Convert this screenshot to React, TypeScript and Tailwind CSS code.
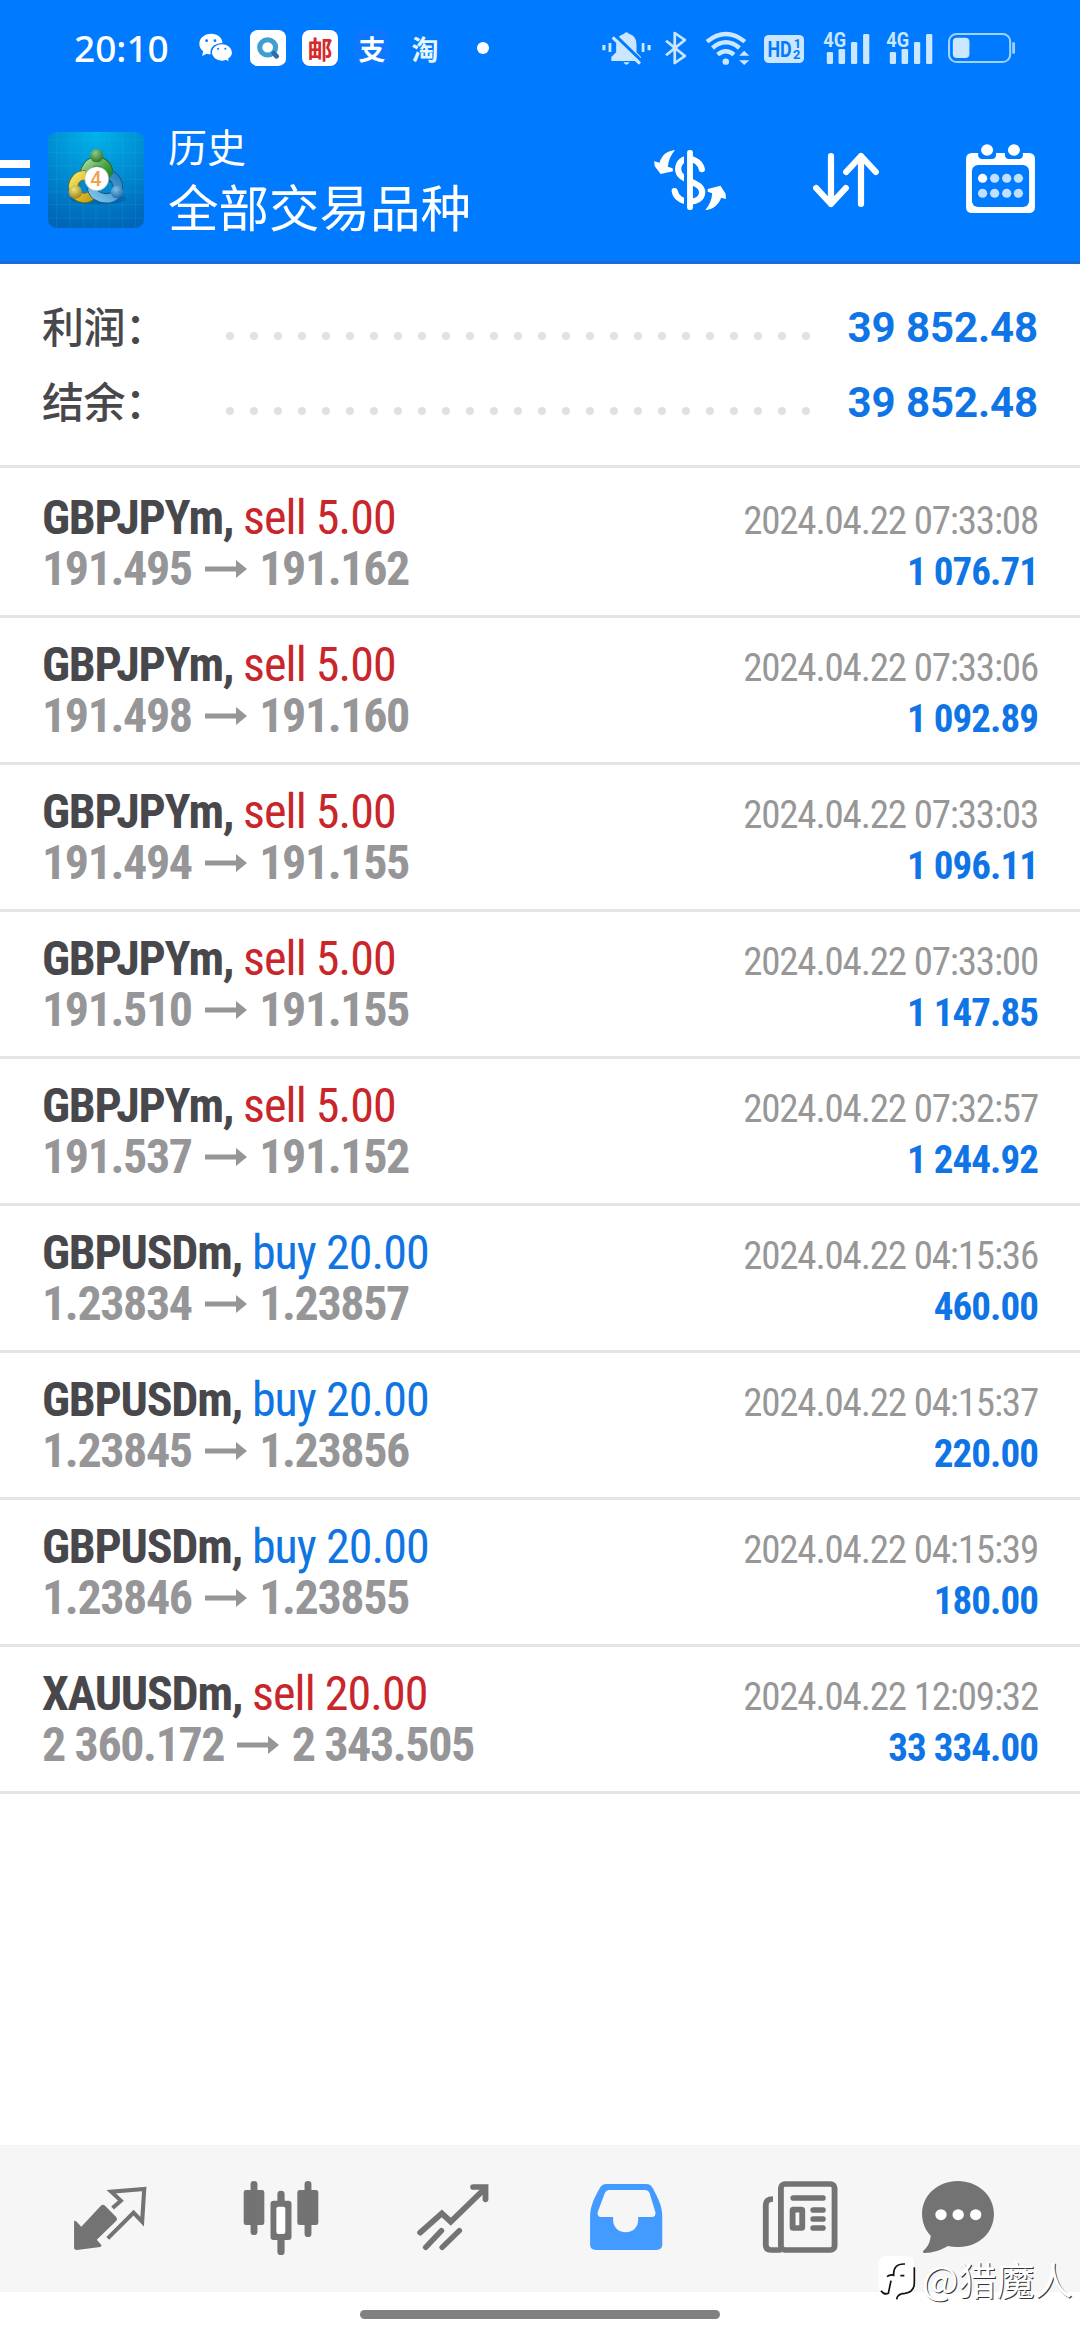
import clsx from "clsx";

interface Deal {
  symbol: string;
  side: "buy" | "sell";
  volume: string;
  open: string;
  close: string;
  time: string;
  profit: string;
}

const deals: Deal[] = [
  { symbol: "GBPJPYm", side: "sell", volume: "5.00", open: "191.495", close: "191.162", time: "2024.04.22 07:33:08", profit: "1 076.71" },
  { symbol: "GBPJPYm", side: "sell", volume: "5.00", open: "191.498", close: "191.160", time: "2024.04.22 07:33:06", profit: "1 092.89" },
  { symbol: "GBPJPYm", side: "sell", volume: "5.00", open: "191.494", close: "191.155", time: "2024.04.22 07:33:03", profit: "1 096.11" },
  { symbol: "GBPJPYm", side: "sell", volume: "5.00", open: "191.510", close: "191.155", time: "2024.04.22 07:33:00", profit: "1 147.85" },
  { symbol: "GBPJPYm", side: "sell", volume: "5.00", open: "191.537", close: "191.152", time: "2024.04.22 07:32:57", profit: "1 244.92" },
  { symbol: "GBPUSDm", side: "buy", volume: "20.00", open: "1.23834", close: "1.23857", time: "2024.04.22 04:15:36", profit: "460.00" },
  { symbol: "GBPUSDm", side: "buy", volume: "20.00", open: "1.23845", close: "1.23856", time: "2024.04.22 04:15:37", profit: "220.00" },
  { symbol: "GBPUSDm", side: "buy", volume: "20.00", open: "1.23846", close: "1.23855", time: "2024.04.22 04:15:39", profit: "180.00" },
  { symbol: "XAUUSDm", side: "sell", volume: "20.00", open: "2 360.172", close: "2 343.505", time: "2024.04.22 12:09:32", profit: "33 334.00" },
];

function Signal() {
  return (
    <svg className="h-[35px] w-[47px] overflow-visible" viewBox="818 90 136 105" preserveAspectRatio="none" fill="#cbe6ff">
      <text x="819" y="138" fontSize="60" fontWeight="700" fontFamily="Roboto, sans-serif" textLength="66" lengthAdjust="spacingAndGlyphs">4G</text>
      <rect x="829" y="153" width="18" height="36" rx="4" />
      <rect x="863" y="144" width="19" height="45" rx="4" />
      <rect x="899" y="123" width="18" height="66" rx="4" />
      <rect x="934" y="99" width="18" height="90" rx="4" />
    </svg>
  );
}

function StatusBar() {
  return (
    <div className="flex h-24 items-center pl-[74px] pr-[65px] text-white">
      <span className="mb-0.5 w-[125px] font-['Noto_Sans',sans-serif] text-[37px] font-medium leading-none">20:10</span>
      <svg className="h-[30px] w-[34px]" viewBox="579 100 98 90" preserveAspectRatio="none">
        <path d="M614 102c-19 0-34 13-34 30 0 9 4 17 11 23l-3 14 13-7c4 1 9 2 13 2 19 0 33-14 33-32s-14-30-33-30Z" fill="#fff" />
        <path d="M645 132c-17 0-31 11-31 26s14 27 31 27c4 0 8-1 11-2l12 4-3-9c7-5 11-12 11-20 0-15-14-26-31-26Z" fill="#fff" stroke="#007bff" strokeWidth="4" />
        <g fill="#007bff">
          <circle cx="601" cy="123" r="4" />
          <circle cx="625" cy="123" r="4" />
          <circle cx="634" cy="147" r="3" />
          <circle cx="655" cy="147" r="3" />
        </g>
      </svg>
      <svg className="ml-[17px] size-9" viewBox="726 90 104 108" preserveAspectRatio="none">
        <rect x="726" y="90" width="104" height="108" rx="22" fill="#fff" />
        <circle cx="777" cy="142" r="23" fill="none" stroke="#3f9fd0" strokeWidth="15" />
        <path d="M795 160l8 9" stroke="#2a6fae" strokeWidth="14" strokeLinecap="round" />
      </svg>
      <div className="ml-4 flex size-9 items-center justify-center rounded-lg bg-white font-['Noto_Sans_CJK_SC',sans-serif] text-[25px] font-bold leading-none text-[#d62a2f]">
        邮
      </div>
      <div className="ml-4 flex size-9 items-center justify-center rounded-lg bg-[#0c77ff] font-['Noto_Sans_CJK_SC',sans-serif] text-[27px] font-bold leading-none">
        支
      </div>
      <div className="ml-[17px] flex size-9 items-center justify-center font-['Noto_Sans_CJK_SC',sans-serif] text-[27px] font-bold leading-none text-[#e6f6ff]">
        淘
      </div>
      <div className="ml-[34px] size-3 rounded-full bg-white" />

      <svg className="ml-auto h-[35px] w-[49px]" viewBox="173 90 142 105" preserveAspectRatio="none" fill="#cbe6ff">
        <path d="M200 180v-12l14-14v-24c0-17 10-28 22-31q8-11 16 0c13 3 21 15 21 31v24l13 14v12Z" />
        <path d="M235 184h18q-9 14-18 0Z" />
        <path d="M212 104l80 80" stroke="#007bff" strokeWidth="9" />
        <path d="M204 109l79 79" stroke="#cbe6ff" strokeWidth="9" />
        <path d="M174 132h9v16h-9ZM192 126h8v27h-8ZM288 126h8v27h-8ZM305 132h9v16h-9Z" />
      </svg>
      <svg className="ml-[14px] h-[36px] w-[23px]" viewBox="358 90 66 108" preserveAspectRatio="none" fill="none" stroke="#cbe6ff" strokeWidth="8" strokeLinejoin="round">
        <path d="M361 122l54 46-29 21V99l29 21-54 46" />
      </svg>
      <svg className="ml-[17px] h-[35px] w-[45px]" viewBox="475 90 132 105" preserveAspectRatio="none" fill="none" stroke="#cbe6ff" strokeWidth="13">
        <path d="M481 122q55-46 111 0M497 141q39-34 79 0M512 161q24-21 48 0" />
        <circle cx="536" cy="182" r="9.5" fill="#cbe6ff" stroke="none" />
        <path d="M575 164l15-15 15 15ZM575 178l15 14 15-14Z" fill="#cbe6ff" stroke="none" />
      </svg>
      <svg className="ml-[14px] mt-0.5 h-[28px] w-[40px]" viewBox="648 105 116 84" preserveAspectRatio="none" fill="#007bff" fontFamily="Roboto, sans-serif" fontWeight="700">
        <rect x="648" y="105" width="116" height="84" rx="14" fill="#cbe6ff" />
        <text x="658" y="171" fontSize="66" textLength="70" lengthAdjust="spacingAndGlyphs">HD</text>
        <text x="734" y="144" fontSize="37">1</text>
        <text x="732" y="178" fontSize="37">2</text>
      </svg>
      <div className="ml-[19px] flex gap-4">
        <Signal />
        <Signal />
      </div>
      <svg className="ml-[15px] h-[30px] w-[67px]" viewBox="1182 99 194 90" preserveAspectRatio="none">
        <rect x="1185" y="102" width="177" height="84" rx="22" fill="none" stroke="#9fd2ff" strokeWidth="6" />
        <rect x="1196" y="113" width="48" height="61" rx="12" fill="#cbe6ff" />
        <rect x="1368" y="127" width="8" height="34" rx="3" fill="#9fd2ff" />
      </svg>
    </div>
  );
}

function AppLogo() {
  return (
    <svg className="size-24" viewBox="6 6 288 288">
      <defs>
        <radialGradient id="tile" cx="0.5" cy="0" r="1">
          <stop offset="0" stopColor="#00b4ea" />
          <stop offset="0.5" stopColor="#008ed2" />
          <stop offset="1" stopColor="#0066b8" />
        </radialGradient>
        <linearGradient id="green" x1="0" y1="0" x2="1" y2="1">
          <stop offset="0" stopColor="#a4d79a" />
          <stop offset="0.5" stopColor="#4fa548" />
          <stop offset="1" stopColor="#1d7d22" />
        </linearGradient>
        <linearGradient id="gold" x1="0" y1="0" x2="1" y2="1">
          <stop offset="0" stopColor="#f2e25c" />
          <stop offset="1" stopColor="#c9a010" />
        </linearGradient>
        <linearGradient id="sky" x1="1" y1="0" x2="0" y2="1">
          <stop offset="0" stopColor="#2b7fbe" />
          <stop offset="1" stopColor="#7cc4ec" />
        </linearGradient>
        <radialGradient id="greenBall" cx="0.4" cy="0.3" r="0.8">
          <stop offset="0" stopColor="#8fcb86" />
          <stop offset="1" stopColor="#1c6a20" />
        </radialGradient>
        <radialGradient id="goldBall" cx="0.4" cy="0.3" r="0.8">
          <stop offset="0" stopColor="#f4e27a" />
          <stop offset="1" stopColor="#8f7a0c" />
        </radialGradient>
        <radialGradient id="skyBall" cx="0.4" cy="0.3" r="0.8">
          <stop offset="0" stopColor="#7cc0ea" />
          <stop offset="1" stopColor="#17619f" />
        </radialGradient>
      </defs>
      <rect x="6" y="6" width="288" height="288" rx="26" fill="url(#tile)" />
      <path d="M32 6v288M72 6v288M112 6v288M150 6v288M190 6v288M230 6v288M268 6v288M6 30h288M6 68h288M6 108h288M6 148h288M6 186h288M6 224h288M6 264h288" stroke="#4cc4ee" strokeOpacity="0.2" strokeWidth="2" />
      <ellipse cx="156" cy="206" rx="84" ry="18" fill="#003f78" opacity="0.3" />
      <g fill="none">
        <path d="M182 150a35 36 0 1 0-62-6" stroke="#22601f" strokeWidth="30" />
        <path d="M182 150a35 36 0 1 0-62-6" stroke="url(#green)" strokeWidth="25" />
        <path d="M118 136a33 34 0 1 0 22 56" stroke="#7a6a12" strokeWidth="30" />
        <path d="M118 136a33 34 0 1 0 22 56" stroke="url(#gold)" strokeWidth="25" />
        <path d="M138 174a42 34 0 0 0 70 22q20-36-12-60" stroke="#155488" strokeWidth="30" />
        <path d="M138 174a42 34 0 0 0 70 22q20-36-12-60" stroke="url(#sky)" strokeWidth="25" />
      </g>
      <circle cx="152" cy="77" r="20" fill="url(#greenBall)" />
      <circle cx="88" cy="186" r="20" fill="url(#goldBall)" />
      <circle cx="213" cy="186" r="19" fill="url(#skyBall)" />
      <circle cx="152" cy="146" r="36" fill="#fff" stroke="#b0b4a4" strokeWidth="2" />
      <text x="150" y="167" textAnchor="middle" fontSize="60" fontWeight="500" fontFamily="Roboto, sans-serif" fill="#f2a052">4</text>
    </svg>
  );
}

function TitleBar() {
  return (
    <div className="flex h-[165px] items-center border-b-[3px] border-[#1a6bd2] pr-[43px] text-white">
      <div className="mt-1 flex flex-col gap-2.5">
        <span className="h-2 w-[30px] bg-white" />
        <span className="h-2 w-[30px] bg-white" />
        <span className="h-2 w-[30px] bg-white" />
      </div>
      <div className="ml-[18px]">
        <AppLogo />
      </div>
      <div className="mb-[7px] ml-6 font-['Noto_Sans_CJK_SC',sans-serif]">
        <div className="text-[39px] leading-[56px]">历史</div>
        <div className="text-[50.5px] leading-[64px]">全部交易品种</div>
      </div>

      <svg className="ml-auto h-[66px] w-[76px]" viewBox="325 441 221 198" preserveAspectRatio="none">
        <path d="M470 508c-8-40-69-44-69 0 0 38 70 34 70 69 0 38-74 38-80-4" fill="none" stroke="#fff" strokeWidth="18" strokeLinecap="round" />
        <path d="M418 450h9v180h-9Z" fill="#007bff" />
        <rect x="427" y="450" width="17" height="180" rx="7" fill="#fff" />
        <path d="M392 450c-22 2-38 14-45 38l-16-4 2 15 17 23 36-8-1-9-14-5c2-20 9-36 21-50Z" fill="#fff" />
        <path d="M480 630c22-2 38-14 46-37l14 4-1-16-15-24-37 10v8l13 5c-1 20-8 36-20 50Z" fill="#fff" />
      </svg>
      <svg className="ml-[83px] h-[66px] w-[70px]" viewBox="787 441 203 198" preserveAspectRatio="none" fill="none" stroke="#fff" strokeWidth="18" strokeLinecap="round" strokeLinejoin="round">
        <path d="M845 468v144M802 564l43 48 43-48M932 612V468M889 516l43-48 43 48" />
      </svg>
      <svg className="ml-[83px] h-[78px] w-[73px]" viewBox="1231 423 212 234" preserveAspectRatio="none">
        <rect x="1237" y="459" width="200" height="180" rx="16" fill="#fff" />
        <rect x="1254" y="495" width="166" height="126" rx="18" fill="#007bff" />
        <path d="M1272 445h52v22q-2 10-14 10h-24q-12 0-14-10ZM1350 445h52v22q-2 10-14 10h-24q-12 0-14-10Z" fill="#007bff" />
        <circle cx="1298" cy="450" r="17.5" fill="#fff" />
        <circle cx="1376" cy="450" r="17.5" fill="#fff" />
        <circle cx="1285" cy="535" r="13.5" fill="#fff" />
        <g fill="#bfe0ff">
          <circle cx="1320" cy="535" r="13.5" />
          <circle cx="1355" cy="535" r="13.5" />
          <circle cx="1389" cy="535" r="13.5" />
          <circle cx="1285" cy="580" r="13.5" />
          <circle cx="1320" cy="580" r="13.5" />
          <circle cx="1355" cy="580" r="13.5" />
          <circle cx="1389" cy="580" r="13.5" />
        </g>
      </svg>
    </div>
  );
}

function SummaryRow({ label, value }: { label: string; value: string }) {
  return (
    <div className="flex h-[75px] items-center">
      <span className="mb-[5px] w-[184px] font-['Noto_Sans_CJK_SC',sans-serif] text-[42px] font-medium leading-none tracking-[-0.5px] text-[#48484c]">
        {label}
      </span>
      <div className="mt-4 flex gap-4">
        {Array.from({ length: 25 }, (_, i) => (
          <span key={i} className="size-2 rounded-full bg-[#e1e1e1]" />
        ))}
      </div>
      <span className="ml-auto text-[42px] font-bold leading-none tracking-[-0.1px] text-[#0f75e6]">{value}</span>
    </div>
  );
}

function DealRow({ deal }: { deal: Deal }) {
  return (
    <div className="flex h-[147px] justify-between border-b-[3px] border-[#e4e4e4] px-[42px] pt-[21px] [font-stretch:75%]">
      <div className="text-[48px] leading-[51px]">
        <div>
          <span className="font-bold tracking-[-1.25px] text-[#48484c]">{deal.symbol}, </span>
          <span className={clsx("tracking-[-0.95px]", deal.side === "sell" ? "text-[#c9262b]" : "text-[#0f75e2]")}>
            {deal.side} {deal.volume}
          </span>
        </div>
        <div className="flex items-center font-bold tracking-[-1.4px] text-[#969698]">
          <span>{deal.open}</span>
          <svg className="ml-[13px] mr-[12.5px] h-[18px] w-[42px]" viewBox="0 0 42 18" fill="#969698">
            <path d="M0 6.5h31V0l11 9-11 9v-6.5H0Z" />
          </svg>
          <span>{deal.close}</span>
        </div>
      </div>
      <div className="mt-1 text-right text-[39px] leading-[51px]">
        <div className="tracking-[-1.18px] text-[#979797]">{deal.time}</div>
        <div className="font-bold tracking-[-0.95px] text-[#0f75e6]">{deal.profit}</div>
      </div>
    </div>
  );
}

function BottomNav() {
  return (
    <div className="flex h-[147px] items-start bg-[#f6f6f6] pl-[72px] pt-[35px]">
      <svg className="h-[76px] w-[76px]" viewBox="209 120 221 228" preserveAspectRatio="none" fill="#737373">
        <path d="M293 197q6-5 12 0l33 35q4 5 0 10l-57 57 14 17q0 4-4 5l-68 9q-8 0-8-8v-80l6 2 15 16Z" />
        <path d="M327 204l24-22-28-27 96-8-6 98-25-27-75 77" fill="none" stroke="#737373" strokeWidth="12" />
      </svg>
      <svg className="ml-[95px] h-[76px] w-[76px]" viewBox="707 120 221 228" preserveAspectRatio="none" fill="#737373">
        <rect x="709" y="150" width="60" height="105" rx="7" />
        <rect x="729" y="123" width="20" height="162" rx="10" />
        <rect x="865" y="150" width="61" height="105" rx="7" />
        <rect x="886" y="123" width="20" height="168" rx="10" />
        <rect x="807" y="152" width="21" height="60" rx="10" />
        <rect x="807" y="280" width="21" height="65" rx="10" />
        <rect x="787" y="182" width="61" height="118" rx="9" />
        <rect x="804" y="200" width="26" height="82" rx="6" fill="#fff" />
      </svg>
      <svg className="ml-[96px] h-[76px] w-[76px]" viewBox="1207 120 221 228" preserveAspectRatio="none" fill="none" stroke="#737373" strokeWidth="17" strokeLinecap="round">
        <path d="M1222 278l63-58 26 25 92-92" />
        <path d="M1376 141h36v37" />
        <path d="M1238 322l46-50M1286 322l50-50" strokeWidth="16" />
      </svg>
      <svg className="ml-[97px] h-[76px] w-[76px]" viewBox="140 120 221 228" preserveAspectRatio="none">
        <path d="M193 132h117q12 0 18 12c16 30 28 55 28 85v84q0 17-17 17H163q-17 0-17-17v-84c0-30 14-60 29-86q6-11 18-11Z" fill="#449bff" />
        <path d="M201 150h104q10 0 14 9l17 58q2 14-11 14h-39v8c0 50-73 50-73 0v-8h-34q-13 0-11-14l21-58q4-9 12-9Z" fill="#f6f6f6" />
      </svg>
      <svg className="ml-[98px] h-[76px] w-[76px]" viewBox="644 120 221 228" preserveAspectRatio="none" fill="none" stroke="#737373" strokeWidth="17">
        <path d="M676 177q-21 0-21 18v120q0 15 15 15h30" />
        <rect x="699" y="132" width="156" height="198" rx="12" />
        <path d="M735 174h86M793 210h28M793 237h28M793 264h28" strokeLinecap="round" />
        <rect x="733" y="209" width="28" height="55" rx="2" />
      </svg>
      <svg className="ml-[82px] h-[76px] w-[76px]" viewBox="1103 120 221 228" preserveAspectRatio="none">
        <path d="M1213 123c58 0 105 43 105 99s-45 99-101 99c-11 0-23-1-33-3-20 12-42 21-69 21q-6-2-3-6c14-12 21-28 22-46-16-17-25-40-25-65 0-56 46-99 104-99Z" fill="#737373" />
        <circle cx="1164" cy="224" r="16.5" fill="#fff" />
        <circle cx="1214" cy="224" r="16.5" fill="#fff" />
        <circle cx="1265" cy="224" r="16.5" fill="#fff" />
      </svg>
    </div>
  );
}

function Watermark() {
  return (
    <div className="absolute left-[877px] top-[2254px] flex items-center">
      <svg className="h-[48px] w-[39px]" viewBox="20 38 117 144">
        <path d="M50 44h55q27 0 27 27v52q0 30-28 34-10 0-16 5l-12 16-6-18H50q-25 0-25-28V70q0-26 25-26Z" fill="#fff" />
        <path d="M132 78v46q0 28-28 32-14 0-20 7-4 4-5 11M32 148q10 14 22 8l8-38M50 106q10-8 20-4-2-36 34-34M90 103h12" fill="none" stroke="#111" strokeWidth="5" />
      </svg>
      <span className="ml-1.5 font-['Noto_Sans_CJK_SC',sans-serif] text-[38.5px] leading-[46px] tracking-[-0.5px] text-white [text-shadow:1px_1px_0_#333]">
        @猎魔人
      </span>
    </div>
  );
}

export default function App() {
  return (
    <div className="relative flex h-[2340px] w-[1080px] flex-col overflow-hidden bg-white font-['Roboto',sans-serif]">
      <header className="h-[264px] bg-[#007bff]">
        <StatusBar />
        <div className="pt-[3px]">
          <TitleBar />
        </div>
      </header>
      <section className="h-[204px] border-b-[3px] border-[#e4e4e4] px-[42px] pt-[26px]">
        <SummaryRow label="利润：" value="39 852.48" />
        <SummaryRow label="结余：" value="39 852.48" />
      </section>
      <main className="flex-1 pt-[3px]">
        {deals.map((deal, i) => (
          <DealRow key={i} deal={deal} />
        ))}
      </main>
      <BottomNav />
      <div className="flex h-12 items-center justify-center pb-[3px]">
        <div className="h-[9px] w-[360px] rounded-full bg-[#808080]" />
      </div>
      <Watermark />
    </div>
  );
}
